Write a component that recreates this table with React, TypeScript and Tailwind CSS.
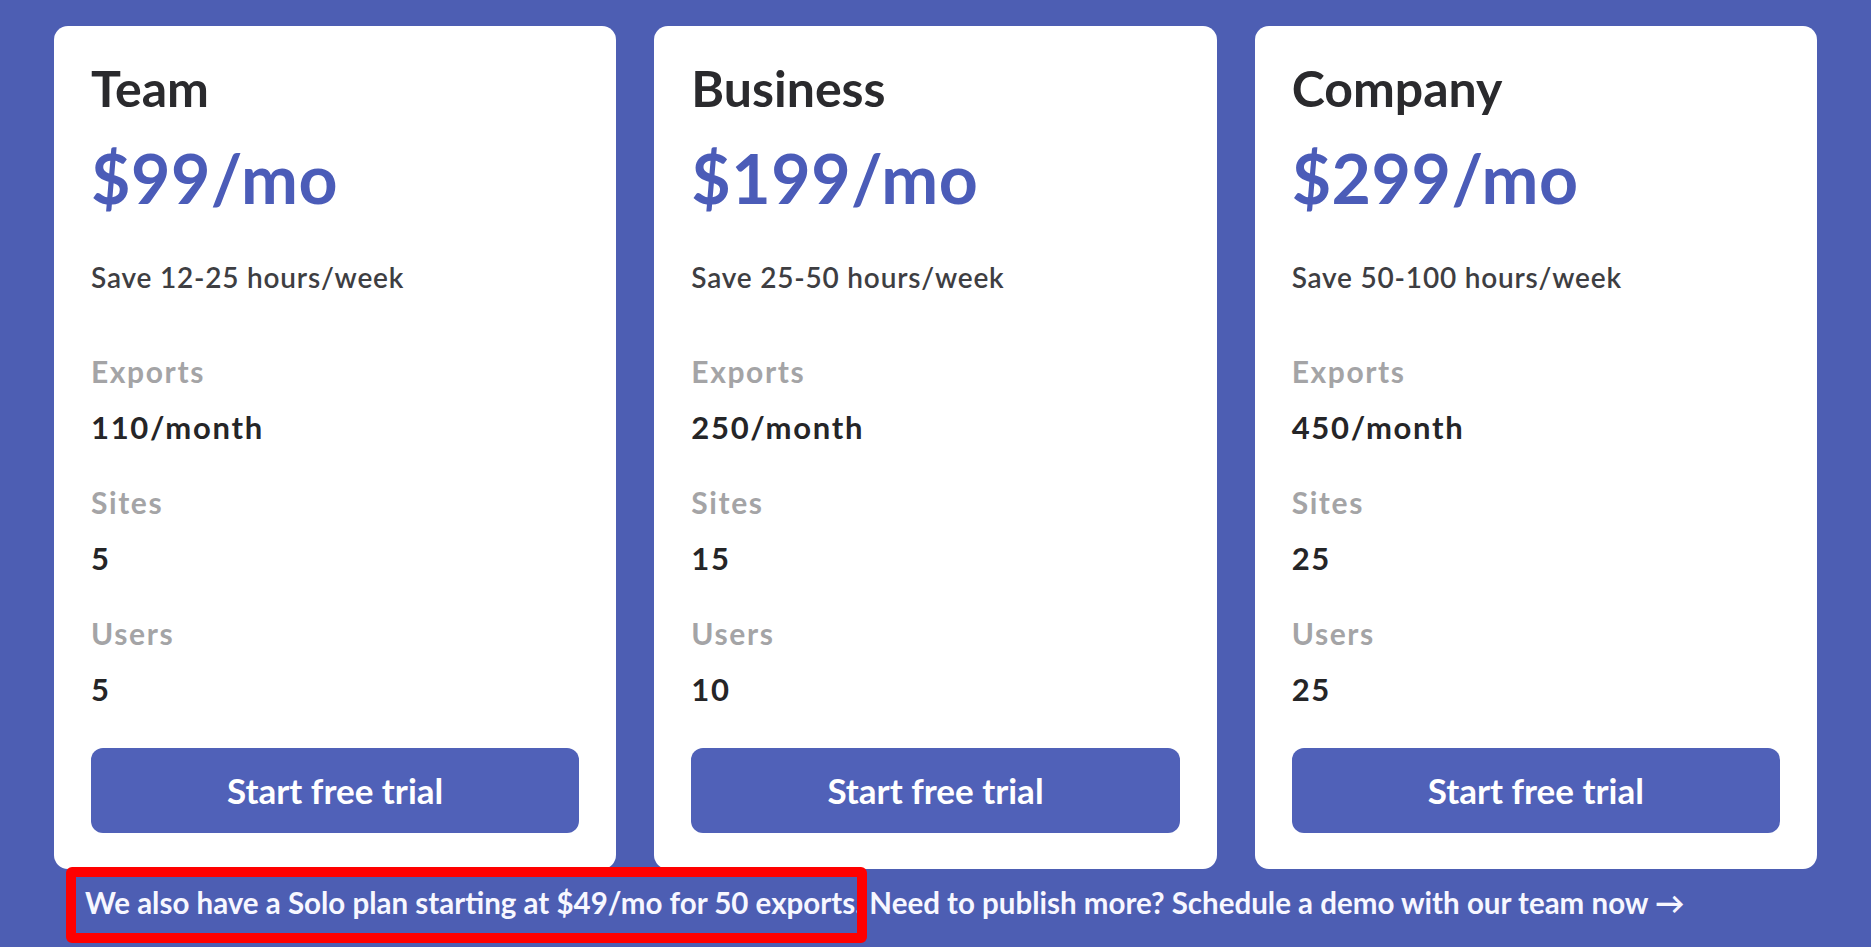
import React from "react";

type Plan = {
  name: string;
  price: string;
  save: string;
  exports: string;
  sites: string;
  users: string;
};

const plans: Plan[] = [
  { name: "Team", price: "$99/mo", save: "Save 12-25 hours/week", exports: "110/month", sites: "5", users: "5" },
  { name: "Business", price: "$199/mo", save: "Save 25-50 hours/week", exports: "250/month", sites: "15", users: "10" },
  { name: "Company", price: "$299/mo", save: "Save 50-100 hours/week", exports: "450/month", sites: "25", users: "25" },
];

function Feature({ label, value, first }: { label: string; value: string; first?: boolean }) {
  return (
    <div className={first ? "flex flex-col" : "mt-[44px] flex flex-col"}>
      <div className="text-[30px] leading-none font-bold tracking-[1.6px] text-[#a4a4a6]">{label}</div>
      <div className="mt-[26px] text-[31px] leading-none font-bold tracking-[1.7px] text-[#252527]">{value}</div>
    </div>
  );
}

function Card({ plan }: { plan: Plan }) {
  return (
    <div className="bg-white rounded-[14px] h-[843px] px-[37px] pt-[37px] flex flex-col">
      <div className="text-[50px] leading-none font-bold text-[#2a2a2d]">{plan.name}</div>
      <div className="mt-[31px] text-[68px] leading-none font-bold text-[#4b5cb8] tracking-[0.5px]">{plan.price}</div>
      <div className="mt-[51px] text-[28px] leading-none font-semibold tracking-[0.8px] text-[#3e3e42]">{plan.save}</div>
      <div className="mt-[65px] flex flex-col">
        <Feature label="Exports" value={plan.exports} first />
        <Feature label="Sites" value={plan.sites} />
        <Feature label="Users" value={plan.users} />
      </div>
      <button className="mt-[43px] h-[85px] w-full rounded-[12px] bg-[#5061b8] text-white text-[35px] leading-none font-bold">
        Start free trial
      </button>
    </div>
  );
}

export default function App() {
  return (
    <div
      className="w-full h-[947px] overflow-hidden bg-[#4d5eb3] px-[54px] pt-[26px]"
      style={{ fontFamily: "Lato, 'Liberation Sans', sans-serif" }}
    >
      <div className="grid grid-cols-3 gap-[38px]">
        {plans.map((p) => (
          <Card key={p.name} plan={p} />
        ))}
      </div>
      <div className="relative mt-[19px] pl-[31px]">
        <div className="text-[29.5px] leading-none font-bold text-[#f7f7ff] whitespace-nowrap">
          We also have a Solo plan starting at $49/mo for 50 exports. Need to publish more? Schedule a demo with our team now →
        </div>
        <div className="absolute left-[12px] top-[-21px] w-[801px] h-[76px] border-[10px] border-[#ff0000] rounded-[6px]" />
      </div>
    </div>
  );
}
